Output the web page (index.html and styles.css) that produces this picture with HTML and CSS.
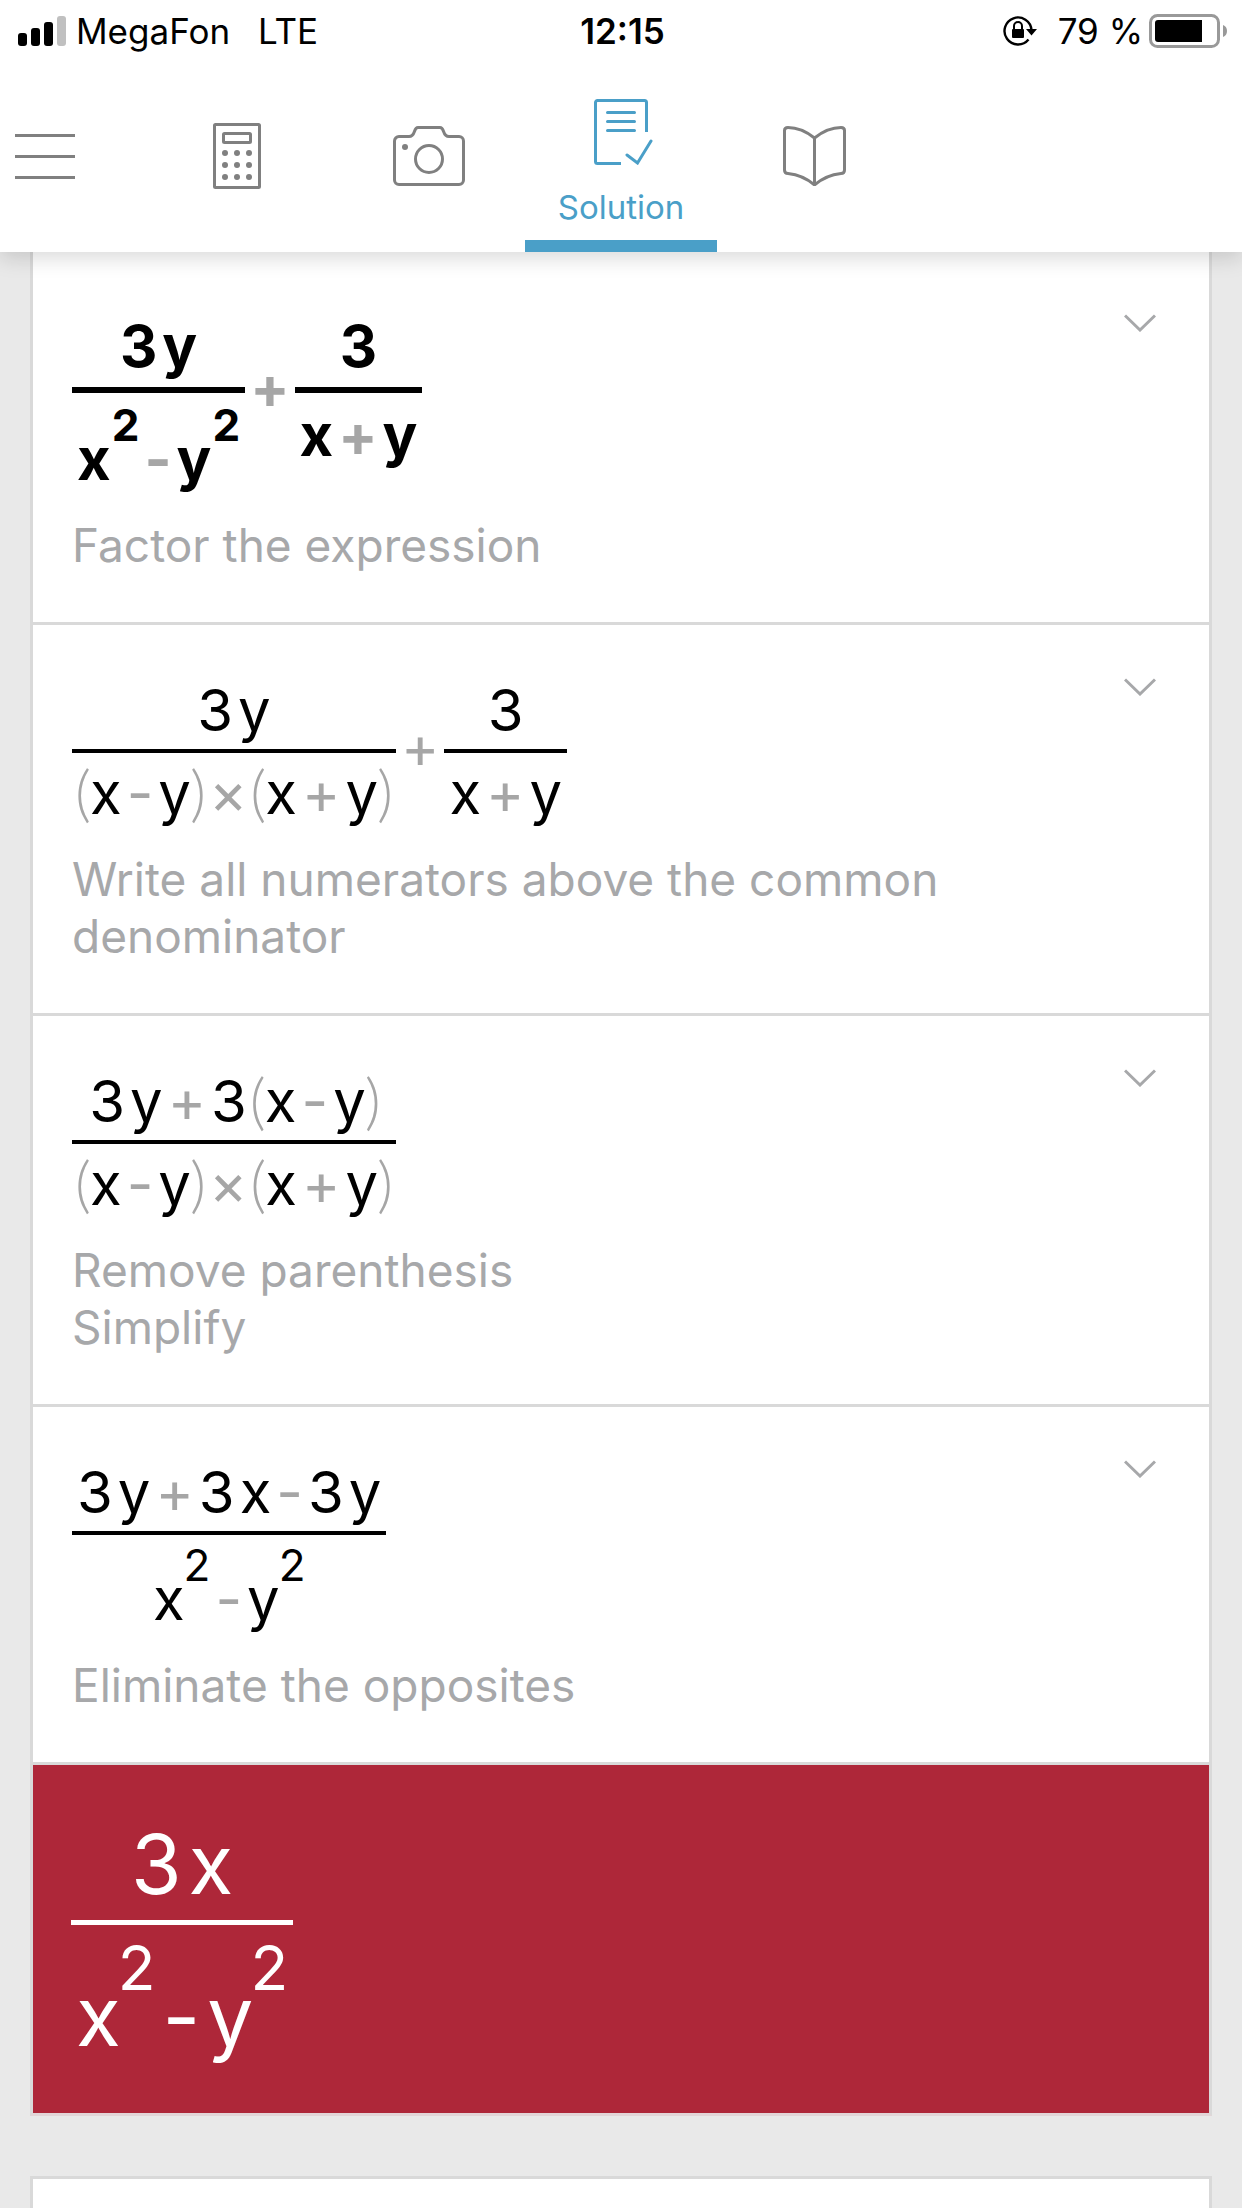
FILE: index.html
```html
<!DOCTYPE html>
<html lang="en">
  <head>
    <meta charset="UTF-8" />
    <meta name="viewport" content="width=device-width, initial-scale=1.0" />
    <title>Solution</title>
    <link rel="stylesheet" href="styles.css" />
  </head>

  <body>
    <header class="header">
      <div class="status">
        <div class="status-side">
          <svg class="signal" width="48" height="30" viewBox="0 0 48 30">
            <rect x="0" y="17" width="9" height="13" rx="3" />
            <rect x="13" y="12" width="9" height="18" rx="3" />
            <rect x="26" y="6" width="9" height="24" rx="3" />
            <rect x="39" y="0" width="9" height="30" rx="3" fill="#c0c0c0" />
          </svg>
          <span class="carrier">MegaFon</span>
          <span>LTE</span>
        </div>
        <time class="clock">12:15</time>
        <div class="status-side status-right">
          <svg class="rotation" width="35" height="32" viewBox="0 0 35 32">
            <path d="M25.5 24.5A13.5 13.5 0 1 1 28.5 15" fill="none" stroke="#000" stroke-width="2.4" />
            <path d="M23 14h11l-5.500 6.500z" />
            <rect x="9" y="14" width="12" height="9" rx="1" />
            <path d="M11 15v-4a4 4 0 0 1 8 0v4" fill="none" stroke="#000" stroke-width="2" />
          </svg>
          <span>79 %</span>
          <svg class="battery" width="78" height="34" viewBox="0 0 78 34">
            <rect x="1.500" y="1.500" width="68" height="31" rx="7" fill="none" stroke="#999" stroke-width="3" />
            <path d="M9 6h44v22H9a3 3 0 0 1-3-3V9a3 3 0 0 1 3-3z" />
            <path d="M74 11a6.500 6.500 0 0 1 0 12z" fill="#999" />
          </svg>
        </div>
      </div>

      <nav class="tabs">
        <button class="menu" aria-label="Menu">
          <svg width="60" height="46" viewBox="0 0 60 46">
            <path d="M0 1.500h60M0 22.500h60M0 43.500h60" />
          </svg>
        </button>
        <button class="tab" aria-label="Calculator">
          <svg width="48" height="66" viewBox="0 0 48 66">
            <rect x="1.500" y="1.500" width="45" height="63" rx="1" />
            <rect x="10.500" y="10.500" width="27" height="9" rx="1" />
            <g class="dots">
              <circle cx="12" cy="30" r="3" />
              <circle cx="24" cy="30" r="3" />
              <circle cx="36" cy="30" r="3" />
              <circle cx="12" cy="42" r="3" />
              <circle cx="24" cy="42" r="3" />
              <circle cx="36" cy="42" r="3" />
              <circle cx="12" cy="54" r="3" />
              <circle cx="24" cy="54" r="3" />
              <circle cx="36" cy="54" r="3" />
            </g>
          </svg>
        </button>
        <button class="tab" aria-label="Camera">
          <svg width="72" height="60" viewBox="0 0 72 60">
            <path d="M6 10.500h10c7 0 4-9 9-9h22c5 0 2 9 9 9h10a4.500 4.500 0 0 1 4.500 4.500v39a4.500 4.500 0 0 1-4.500 4.500H6A4.500 4.500 0 0 1 1.500 54V15A4.500 4.500 0 0 1 6 10.500z" />
            <circle cx="36" cy="33" r="13.500" />
            <circle class="dots" cx="12" cy="21" r="3" />
          </svg>
        </button>
        <button class="tab active">
          <svg width="66" height="66" viewBox="-6 0 66 66">
            <path d="M27 64.500H3.500a2 2 0 0 1-2-2v-59a2 2 0 0 1 2-2h47a2 2 0 0 1 2 2V33" />
            <path d="M13.500 13.500h27M13.500 22.500h27M13.500 31.500h27M33 56l10.500 8L57 42" stroke-linecap="round" />
          </svg>
          <span>Solution</span>
        </button>
        <button class="tab" aria-label="Textbooks">
          <svg width="66" height="60" viewBox="-3 0 66 60">
            <path d="M31.500 12C24 6 15 1.500 5 1.500c-2 0-3.500 1-3.500 3V44c0 2 1 3.500 3.500 3.500 10 1 19 5 26.500 11.500C39 52.500 48 48.500 58 47.500c2.500 0 3.500-1.500 3.500-3.500V4.500c0-2-1.500-3-3.500-3C48 1.500 39 6 31.500 12zV58" />
          </svg>
        </button>
      </nav>
    </header>

    <main>
      <section class="card steps">
        <div class="step first">
          <div>
            <div class="math bold">
              <div class="frac">
                <div class="num"><span>3</span><span>y</span></div>
                <div class="den">
                  <span>x</span><sup>2</sup><span class="op">-</span><span>y</span><sup>2</sup>
                </div>
              </div>
              <span class="op mid">+</span>
              <div class="frac">
                <div class="num"><span>3</span></div>
                <div class="den"><span>x</span><span class="op">+</span><span>y</span></div>
              </div>
            </div>
            <p class="hint">Factor the expression</p>
          </div>
          <button class="expand" aria-label="Show details">
            <svg width="32" height="18" viewBox="0 0 32 18"><path d="M1 1.500l15 14.500 15-14.500" /></svg>
          </button>
        </div>

        <div class="step">
          <div>
            <div class="math">
              <div class="frac">
                <div class="num"><span>3</span><span>y</span></div>
                <div class="den">
                  <span class="paren open">(</span><span>x</span><span class="op">-</span><span>y</span><span class="paren close">)</span><span class="op">×</span><span class="paren open">(</span><span>x</span><span class="op">+</span><span>y</span><span class="paren close">)</span>
                </div>
              </div>
              <span class="op mid">+</span>
              <div class="frac">
                <div class="num"><span>3</span></div>
                <div class="den"><span>x</span><span class="op">+</span><span>y</span></div>
              </div>
            </div>
            <p class="hint">Write all numerators above the common denominator</p>
          </div>
          <button class="expand" aria-label="Show details">
            <svg width="32" height="18" viewBox="0 0 32 18"><path d="M1 1.500l15 14.500 15-14.500" /></svg>
          </button>
        </div>

        <div class="step">
          <div>
            <div class="math">
              <div class="frac">
                <div class="num">
                  <span>3</span><span>y</span><span class="op">+</span><span>3</span><span class="paren open">(</span><span>x</span><span class="op">-</span><span>y</span><span class="paren close">)</span>
                </div>
                <div class="den">
                  <span class="paren open">(</span><span>x</span><span class="op">-</span><span>y</span><span class="paren close">)</span><span class="op">×</span><span class="paren open">(</span><span>x</span><span class="op">+</span><span>y</span><span class="paren close">)</span>
                </div>
              </div>
            </div>
            <p class="hint">Remove parenthesis<br />Simplify</p>
          </div>
          <button class="expand" aria-label="Show details">
            <svg width="32" height="18" viewBox="0 0 32 18"><path d="M1 1.500l15 14.500 15-14.500" /></svg>
          </button>
        </div>

        <div class="step">
          <div>
            <div class="math">
              <div class="frac">
                <div class="num">
                  <span>3</span><span>y</span><span class="op">+</span><span>3</span><span>x</span><span class="op">-</span><span>3</span><span>y</span>
                </div>
                <div class="den">
                  <span>x</span><sup>2</sup><span class="op">-</span><span>y</span><sup>2</sup>
                </div>
              </div>
            </div>
            <p class="hint">Eliminate the opposites</p>
          </div>
          <button class="expand" aria-label="Show details">
            <svg width="32" height="18" viewBox="0 0 32 18"><path d="M1 1.500l15 14.500 15-14.500" /></svg>
          </button>
        </div>

        <div class="result">
          <div class="math large">
            <div class="frac">
              <div class="num"><span>3</span><span>x</span></div>
              <div class="den">
                <span>x</span><sup>2</sup><span class="op">-</span><span>y</span><sup>2</sup>
              </div>
            </div>
          </div>
        </div>
      </section>

      <section class="card next"></section>
    </main>
  </body>
</html>
```
FILE: styles.css
```css
* {
  margin: 0;
  padding: 0;
  box-sizing: border-box;
}

body {
  min-height: 100vh;
  display: flex;
  flex-direction: column;
  background-color: #e9e9e9;
  font-family: Inter, "Liberation Sans", sans-serif;
  color: #000;
}

button {
  border: none;
  background: none;
  font: inherit;
  cursor: pointer;
}

svg {
  display: block;
  flex-shrink: 0;
}

/* header */
.header {
  position: relative;
  z-index: 1;
  background-color: #fff;
  box-shadow: 0 6px 20px rgba(0, 0, 0, 0.15);
}

.status {
  height: 62px;
  padding: 0 15px 0 18px;
  display: flex;
  align-items: center;
  font-size: 35px;
}

.status-side {
  flex: 1;
  display: flex;
  align-items: center;
}

.status-right {
  justify-content: flex-end;
}

.carrier {
  margin: 0 28px 0 10px;
}

.clock {
  font-weight: 600;
}

.rotation {
  margin-right: 20px;
}

.battery {
  margin-left: 6px;
}

.tabs {
  height: 190px;
  display: flex;
}

.tabs svg {
  fill: none;
  stroke: #808080;
  stroke-width: 3;
}

.tabs .dots {
  fill: #808080;
  stroke: none;
}

.menu {
  width: 141px;
  padding-left: 15px;
}

.tab {
  width: 192px;
  display: flex;
  flex-direction: column;
  align-items: center;
  justify-content: center;
  padding-bottom: 2px;
  border-bottom: 0 solid #4a9fc8;
}

.tab.active {
  justify-content: flex-start;
  gap: 22px;
  padding-top: 37px;
  border-bottom-width: 12px;
  color: #4a9fc8;
  font-size: 33px;
  line-height: 40px;
}

.tab.active svg {
  stroke: #4a9fc8;
}

/* cards */
main {
  flex: 1;
  display: flex;
  flex-direction: column;
  padding: 0 30px;
}

.card {
  background-color: #fff;
  border: 3px solid #d9d9d9;
}

.steps {
  border-top: none;
  border-bottom-color: #e2d5d7;
}

.next {
  flex: 1;
  margin-top: 60px;
  border-bottom: none;
}

.step {
  display: flex;
  justify-content: space-between;
  align-items: flex-start;
  padding: 55px 53px 48px 39px;
  border-bottom: 3px solid #d9d9d9;
}

.step.first {
  padding-top: 64px;
}

.hint {
  margin-top: 28px;
  color: #a7a8aa;
  font-size: 46px;
  line-height: 57px;
}

.expand {
  margin-top: -2px;
}

.expand svg {
  fill: none;
  stroke: #a7a8aa;
  stroke-width: 3;
}

.result {
  padding: 58px 38px 54px;
  background-color: #ae2739;
  color: #fff;
}

/* formulas */
.math {
  display: flex;
  align-items: flex-start;
  gap: 5px;
  font-size: 58px;
  line-height: 60px;
}

.num,
.den {
  display: flex;
  justify-content: center;
  align-items: flex-end;
  gap: 5px;
  padding: 0 5px;
}

.num {
  padding-bottom: 9px;
}

.den {
  padding-top: 10px;
  border-top: 4px solid #000;
}

.math sup {
  margin: 0 0 44px -6px;
  font-size: 44px;
  line-height: 40px;
}

.op,
.paren {
  color: #a6a6a6;
}

.paren {
  font-family: Lato, sans-serif;
  font-size: 62px;
  font-weight: 300;
  line-height: 56px;
}

.open {
  margin: 0 -6px 4px -2px;
}

.close {
  margin: 0 -2px 4px -6px;
}

.mid {
  margin-top: 37px;
}

.bold {
  font-weight: 700;
}

.bold .num {
  padding-bottom: 11px;
}

.bold .den {
  padding-top: 12px;
  border-top-width: 6px;
}

.bold sup {
  margin-left: -4px;
}

.bold .mid {
  margin-top: 41px;
}

.large {
  font-size: 82px;
  line-height: 84px;
}

.large .num,
.large .den {
  gap: 7px;
}

.large .num {
  padding-bottom: 13px;
}

.large .den {
  padding-top: 12px;
  border-top: 5px solid #fff;
}

.large sup {
  margin: 0 0 60px -10px;
  font-size: 62px;
  line-height: 62px;
}

.large .op {
  color: #fff;
}
```
